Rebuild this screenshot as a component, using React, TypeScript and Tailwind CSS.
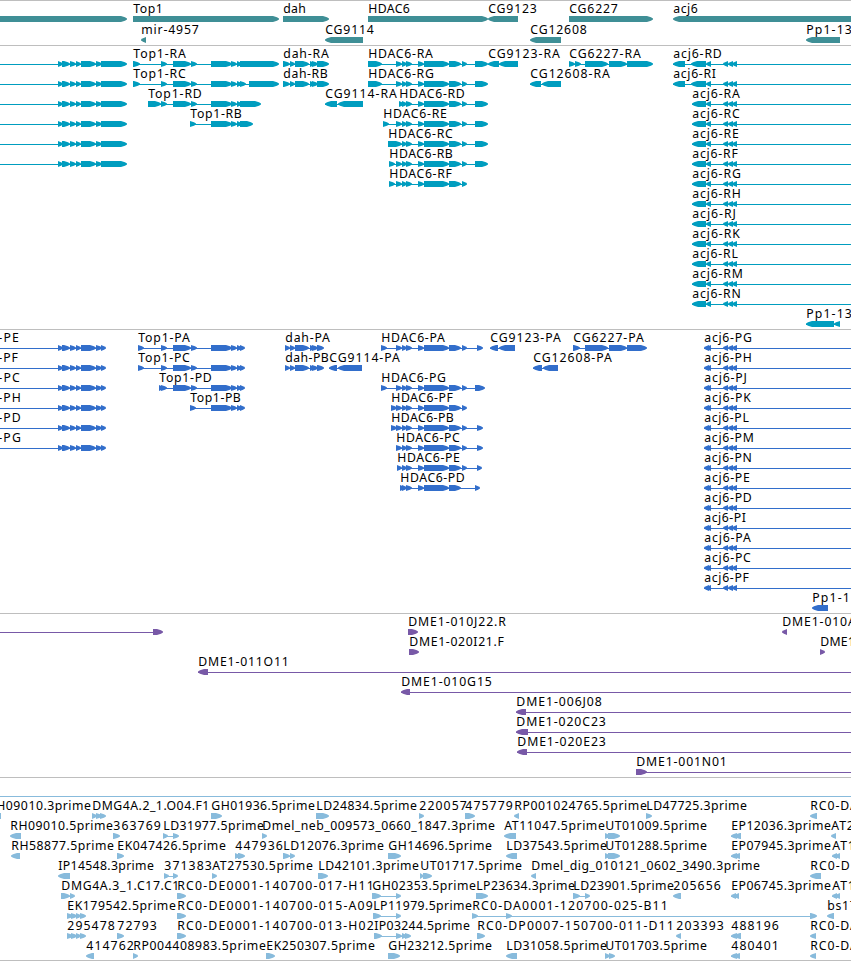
import clsx from 'clsx';

type Span = [number, number];

interface Feature {
  label?: string;
  x: number;
  row: number;
  blocks: Span[];
  reverse?: boolean;
  // right end of the connecting line, when it runs past the last block
  end?: number;
}

interface TrackProps {
  name: string;
  features: Feature[];
  color: string;
  height: string;
  pitch?: number;
  offset?: number;
  baseline?: boolean;
}

const WIDTH = 851;
const HEAD = 6;

// Label advances, in whole pixels
const ADVANCE: Record<string, number> = {
  A: 8, B: 7, C: 8, D: 9, E: 7, F: 6, G: 9, H: 9, I: 3, J: 4, K: 8, L: 6, M: 11, N: 9, O: 9, P: 7, R: 8, T: 7, U: 9,
  a: 7, b: 8, c: 6, d: 8, e: 7, g: 8, h: 8, i: 3, j: 4, l: 3, m: 11, n: 8, o: 7, p: 8, r: 5, s: 6,
  '-': 7, '_': 5.5, '.': 4,
};

const labelWidth = (text: string) =>
  text.split('').reduce((sum, ch) => sum + (ADVANCE[ch] ?? 8), 0) - 0.5;

const f = (label: string, row: number, x: number, blocks: Span[], end?: number): Feature => ({ label, row, x, blocks, end });
const r = (label: string, row: number, x: number, blocks: Span[], end?: number): Feature => ({
  label, row, x, blocks, end, reverse: true,
});

const genes: Feature[] = [
  f('', 0, -10, [[-10, 127]]),
  f('Top1', 0, 133, [[133, 279]]),
  f('dah', 0, 283, [[283, 329]]),
  f('HDAC6', 0, 368, [[368, 488]]),
  r('CG9123', 0, 488, [[488, 518]]),
  f('CG6227', 0, 569, [[569, 653]]),
  r('acj6', 0, 673, [[673, 860]]),
  r('mir-4957', 1, 141, [[141, 146]]),
  r('CG9114', 1, 325, [[325, 363]]),
  r('CG12608', 1, 530, [[530, 561]]),
  r('Pp1-13', 1, 806, [[806, 840]]),
];

const leftExons: Span[] = [[58, 63], [62, 70], [70, 76], [76, 81], [81, 96], [96, 102]];
const topExons: Span[] = [[173, 191], [191, 197], [211, 232], [231, 237]];
const dahExons: Span[] = [[290, 295], [295, 309], [310, 315], [312, 318]];
const hdacCore: Span[] = [[402, 407], [406, 412], [418, 424], [424, 449], [449, 461]];
const hdacExons: Span[] = [[396, 402], ...hdacCore, [462, 467]];
const acjExons: Span[] = [[723, 728], [728, 733], [732, 737]];

const transcripts: Feature[] = [
  ...[0, 1, 2, 3, 4, 5].map((row) => f('', row, -10, [...leftExons, [101, 127]])),
  f('Top1-RA', 0, 133, [[133, 140], [161, 167], ...topExons, [237, 242], [240, 279]]),
  f('Top1-RC', 1, 133, [[133, 140], [161, 167], ...topExons, [237, 242], [240, 246], [249, 279]]),
  f('Top1-RD', 2, 148, [[148, 161], [161, 167], ...topExons, [237, 242], [240, 261]]),
  f('Top1-RB', 3, 190, [[190, 196], [211, 232], [231, 237], [237, 242], [240, 253]]),
  f('dah-RA', 0, 283, [[283, 290], ...dahExons, [317, 329]]),
  f('dah-RB', 1, 283, [[283, 290], ...dahExons, [317, 329]]),
  r('CG9114-RA', 2, 325, [[325, 337], [338, 363]]),
  f('HDAC6-RA', 0, 368, [[368, 382], ...hdacExons, [475, 488]]),
  f('HDAC6-RG', 1, 368, [[368, 382], ...hdacExons, [475, 488]]),
  f('HDAC6-RD', 2, 399, [[399, 404], ...hdacCore, [462, 467], [475, 488]]),
  f('HDAC6-RE', 3, 383, [[383, 389], ...hdacExons, [475, 488]]),
  f('HDAC6-RC', 4, 388, [[388, 402], ...hdacCore, [462, 467], [475, 488]]),
  f('HDAC6-RB', 5, 389, [[389, 395], ...hdacExons, [475, 488]]),
  f('HDAC6-RF', 6, 389, [[389, 395], ...hdacExons]),
  r('CG9123-RA', 0, 488, [[488, 499], [499, 518]]),
  r('CG12608-RA', 1, 530, [[530, 541], [542, 561]]),
  f('CG6227-RA', 0, 569, [[569, 575], [575, 581], [585, 608], [609, 627], [627, 653]]),
  ...['RD', 'RI'].map((id, i) =>
    r(`acj6-${id}`, i, 673, [[673, 685], [691, 706], [706, 711], ...acjExons], WIDTH),
  ),
  ...['RA', 'RC', 'RE', 'RF', 'RG', 'RH', 'RJ', 'RK', 'RL', 'RM', 'RN'].map((id, i) =>
    r(`acj6-${id}`, i + 2, 692, [[692, 706], [706, 711], ...acjExons], WIDTH),
  ),
  r('Pp1-13', 13, 806, [[806, 834], [834, 840]]),
];

const proteins: Feature[] = [
  ...['PE', 'PF', 'PC', 'PH', 'PD', 'PG'].map((id, row) => f(`-${id}`, row, -2, [...leftExons, [101, 106]])),
  f('Top1-PA', 0, 138, [[138, 144], [161, 167], ...topExons, [237, 242], [240, 245]]),
  f('Top1-PC', 1, 138, [[138, 144], [161, 167], ...topExons, [237, 242], [240, 245]]),
  f('Top1-PD', 2, 159, [[159, 164], [161, 167], ...topExons, [237, 242], [240, 245]]),
  f('Top1-PB', 3, 190, [[190, 196], [211, 232], [231, 237], [237, 242], [240, 245]]),
  f('dah-PA', 0, 285, [[285, 290], ...dahExons, [317, 324]]),
  f('dah-PB', 1, 285, [[285, 290], ...dahExons, [317, 324]]),
  r('CG9114-PA', 1, 329, [[329, 337], [338, 362]]),
  f('HDAC6-PA', 0, 381, [[381, 387], ...hdacExons, [477, 483]]),
  f('HDAC6-PG', 2, 381, [[381, 387], ...hdacExons, [475, 485]]),
  f('HDAC6-PF', 3, 391, [[391, 397], ...hdacExons]),
  f('HDAC6-PB', 4, 391, [[391, 397], ...hdacExons, [477, 483]]),
  f('HDAC6-PC', 5, 396, [...hdacExons, [477, 483]]),
  f('HDAC6-PE', 6, 397, [[397, 402], ...hdacCore, [462, 467], [477, 482]]),
  f('HDAC6-PD', 7, 400, [[400, 405], ...hdacCore, [475, 480]]),
  r('CG9123-PA', 0, 490, [[490, 498], [499, 515]]),
  r('CG12608-PA', 1, 533, [[533, 542], [543, 558]]),
  f('CG6227-PA', 0, 573, [[573, 580], [585, 608], [609, 627], [627, 647]]),
  ...['PG', 'PH', 'PJ', 'PK', 'PL', 'PM', 'PN', 'PE', 'PD', 'PI', 'PA', 'PC', 'PF'].map((id, row) =>
    r(`acj6-${id}`, row, 704, [[704, 709], [706, 711], ...acjExons], WIDTH),
  ),
  r('Pp1-1', 13, 812, [[812, 828]]),
];

const clones: Feature[] = [
  f('', 0, -10, [[153, 163]]),
  f('DME1-010J22.R', 0, 408, [[408, 418]]),
  r('DME1-010A', 0, 782, [[782, 787]]),
  f('DME1-020I21.F', 1, 409, [[409, 419]]),
  f('DME1', 1, 820, [[820, 825]]),
  r('DME1-011O11', 2, 198, [[198, 208]], WIDTH),
  r('DME1-010G15', 3, 401, [[401, 410]], WIDTH),
  r('DME1-006J08', 4, 516, [[516, 526]], WIDTH),
  r('DME1-020C23', 5, 516, [[516, 528]], WIDTH),
  r('DME1-020E23', 6, 517, [[517, 527]], WIDTH),
  f('DME1-001N01', 7, 636, [[636, 647]], WIDTH),
];

const ests: Feature[] = [
  r('H09010.3prime', 0, -4, [[-9, 1]]),
  f('DMG4A.2_1.O04.F1', 0, 92, [[92, 97], [96, 102], [100, 106]]),
  f('GH01936.5prime', 0, 211, [[211, 222]]),
  f('LD24834.5prime', 0, 316, [[316, 329]]),
  f('220057', 0, 419, [[419, 424]]),
  f('475779', 0, 465, [[465, 475]]),
  r('RP001024765.5prime', 0, 514, [[514, 519]]),
  f('LD47725.3prime', 0, 646, [[646, 652]]),
  r('RC0-DA', 0, 810, [[810, 817]]),

  r('RH09010.5prime', 1, 10, [[10, 21]]),
  f('363769', 1, 113, [[113, 120]]),
  f('LD31977.5prime', 1, 163, [[163, 168], [173, 179]]),
  f('Dmel_neb_009573_0660_1847.3prime', 1, 262, [[262, 267]]),
  r('AT11047.5prime', 1, 504, [[504, 516]]),
  f('UT01009.5prime', 1, 605, [[605, 610], [608, 620]]),
  r('EP12036.3prime', 1, 731, [[731, 737], [734, 741]]),
  r('AT2', 1, 831, [[831, 836]]),

  r('RH58877.5prime', 2, 11, [[11, 20]]),
  f('EK047426.5prime', 2, 117, [[117, 124]]),
  f('447936', 2, 235, [[235, 240], [238, 245]]),
  f('LD12076.3prime', 2, 283, [[283, 290], [290, 295]]),
  f('GH14696.5prime', 2, 388, [[388, 401]]),
  r('LD37543.5prime', 2, 506, [[506, 517]]),
  f('UT01288.5prime', 2, 605, [[605, 610], [608, 620]]),
  r('EP07945.3prime', 2, 731, [[731, 737], [734, 740]]),
  r('AT1', 2, 832, [[832, 837], [835, 840]]),

  r('IP14548.3prime', 3, 58, [[58, 70]]),
  f('371383', 3, 164, [[164, 169], [173, 178]]),
  f('AT27530.5prime', 3, 212, [[212, 217]]),
  f('LD42101.3prime', 3, 318, [[318, 328]]),
  f('UT01717.5prime', 3, 420, [[420, 424], [423, 432]]),
  r('Dmel_dig_010121_0602_3490.3prime', 3, 531, [[531, 536]]),
  r('RC0-D', 3, 810, [[810, 821]]),

  f('DMG4A.3_1.C17.C1', 4, 61, [[61, 70], [70, 75]]),
  f('RC0-DE0001-140700-017-H11', 4, 177, [[177, 186]]),
  f('GH02353.5prime', 4, 372, [[372, 381], [396, 401]]),
  f('LP23634.3prime', 4, 476, [[476, 488]]),
  f('LD23901.5prime', 4, 573, [[573, 580], [585, 590]]),
  r('205656', 4, 673, [[673, 681]]),
  r('EP06745.3prime', 4, 731, [[731, 736], [734, 739]]),
  r('AT1', 4, 832, [[832, 837], [835, 840]]),

  f('EK179542.5prime', 5, 67, [[67, 73], [71, 77], [76, 81], [80, 86]]),
  f('RC0-DE0001-140700-015-A09', 5, 177, [[177, 186]]),
  f('LP11979.5prime', 5, 373, [[373, 381], [396, 401]]),
  f('RC0-DA0001-120700-025-B11', 5, 472, [[472, 478], [506, 512], [810, 817]]),
  r('bs17', 5, 827, [[827, 834]]),

  f('295478', 6, 67, [[67, 73], [71, 77], [76, 81], [80, 86]]),
  f('72793', 6, 117, [[117, 124]]),
  f('RC0-DE0001-140700-013-H02', 6, 177, [[177, 186]]),
  f('IP03244.5prime', 6, 374, [[374, 382], [396, 402], [402, 407], [405, 411]]),
  f('RC0-DP0007-150700-011-D11', 6, 477, [[477, 485]]),
  r('203393', 6, 676, [[676, 681]]),
  r('488196', 6, 731, [[731, 737], [734, 741]]),
  r('RC0-DA', 6, 810, [[810, 816]]),

  r('414762', 7, 86, [[86, 94]]),
  f('RP004408983.5prime', 7, 133, [[133, 138]]),
  f('EK250307.5prime', 7, 266, [[266, 275]]),
  f('GH23212.5prime', 7, 388, [[388, 400]]),
  r('LD31058.5prime', 7, 506, [[506, 517]]),
  f('UT01703.5prime', 7, 605, [[605, 610], [609, 615]]),
  r('480401', 7, 731, [[731, 737], [734, 740]]),
  r('RC0-DA', 7, 810, [[810, 816]]),
];

function blockPath([a, b]: Span, y: number, reverse?: boolean) {
  const head = Math.min(HEAD, b - a);
  const tip = reverse ? a : b;
  const tail = reverse ? b : a;
  const dir = reverse ? 1 : -1;
  const neck = tip + dir * head;
  const mid = tip + dir * 2;
  return `M${tail} ${y}H${neck}L${mid} ${y + 1.3}L${tip} ${y + 2.5}V${y + 3.5}L${mid} ${y + 4.7}L${neck} ${y + 6}H${tail}Z`;
}

function Glyph({ feature, y }: { feature: Feature; y: number }) {
  const { blocks, x, label, reverse, end } = feature;
  const from = Math.min(x, blocks[0][0]);
  const to = end ?? blocks[blocks.length - 1][1];

  return (
    <g>
      {(blocks.length > 1 || end || !label) && (
        <rect x={from} y={y + 6} width={to - from - (end ? 0 : 2)} height={1} />
      )}
      {blocks.map((block, i) => (
        <path key={i} d={blockPath(block, y + 3, reverse)} />
      ))}
      {label && (
        <text x={x + 0.3} y={y} textLength={labelWidth(label)} className="fill-black">
          {label}
        </text>
      )}
    </g>
  );
}

function Track({ name, features, color, height, pitch = 20, offset = 12, baseline }: TrackProps) {
  return (
    <section aria-label={name} className={clsx('w-full overflow-hidden border-t border-[#bebebe]', height)}>
      <svg width={WIDTH} height="100%" className={clsx("block font-['Noto_Sans','DejaVu_Sans',sans-serif] text-[12.25px]", color)}>
        {baseline && <rect x={0} y={18} width={WIDTH} height={1} />}
        {features.map((feature, i) => (
          <Glyph key={i} feature={feature} y={offset + feature.row * pitch} />
        ))}
      </svg>
    </section>
  );
}

export default function App() {
  return (
    <main className="flex h-[961px] w-[851px] flex-col overflow-hidden bg-white">
      <Track name="Genes" features={genes} color="fill-[#3f8f96]" height="h-[45px]" pitch={21} />
      <Track name="Transcripts" features={transcripts} color="fill-[#009dbf]" height="h-[284px]" />
      <Track name="Proteins" features={proteins} color="fill-[#326ecb]" height="h-[284px]" />
      <Track name="Clones" features={clones} color="fill-[#7859a7]" height="h-[164px]" />
      <Track name="ESTs" features={ests} color="fill-[#88bbdc]" height="h-[183px]" offset={32} baseline />
      <div className="h-px bg-[#bebebe]" />
    </main>
  );
}
